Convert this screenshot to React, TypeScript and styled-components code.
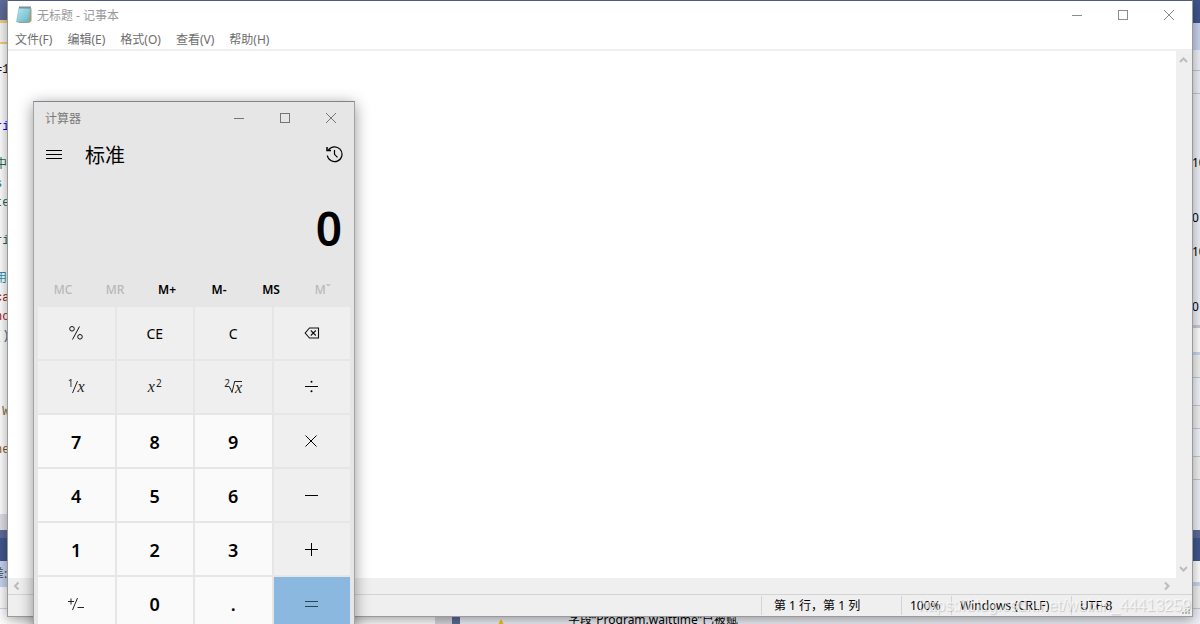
import React from "react";
import styled, { createGlobalStyle, css } from "styled-components";

const ui = `"Noto Sans", "Noto Sans CJK SC", sans-serif`;

const GlobalStyle = createGlobalStyle`
  *, *::before, *::after { box-sizing: border-box; }
  html, body { margin: 0; height: 100%; overflow: hidden; }
  body { font-family: ${ui}; font-size: 12px; color: #000; }
  button { border: 0; padding: 0; margin: 0; background: none; font: inherit; color: inherit; }
  svg { display: block; }
`;

const Desktop = styled.main`
  position: relative;
  height: 100vh;
  overflow: hidden;
  background: #f0f1f8;
`;

/* ---------- IDE behind the windows ---------- */

const Ide = styled.div`
  display: flex;
  height: 100%;
`;

const EditorPane = styled.section`
  display: flex;
  flex-direction: column;
  flex: 0 0 452px;
  background: #fff;
`;

const PaneGap = styled.div`
  flex: 0 0 8px;
  background: #5d6b99;
`;

const SidePane = styled.section`
  display: flex;
  flex-direction: column;
  flex: 1;
  min-width: 0;
`;

const Band = styled.div<{ $h: number; $c: string; $line?: string }>`
  flex: 0 0 ${(p) => p.$h}px;
  background: ${(p) => p.$c};
  border-bottom: ${(p) => (p.$line ? `1px solid ${p.$line}` : "0")};
`;

const CaptionBand = styled(Band)`
  line-height: 26px;
  text-indent: -8px;
  color: #444;
  overflow: hidden;
`;

const Code = styled.div`
  flex: 0 0 470px;
  display: flex;
  flex-direction: column;
  padding-top: 17px;
  margin-left: -5px;
  font: 12px/19px "Liberation Mono", "Noto Sans CJK SC", monospace;
`;

const CodeLine = styled.div<{ $c?: string }>`
  height: 19px;
  color: ${(p) => p.$c ?? "#111"};
  white-space: pre;
`;

const EditorFoot = styled.div`
  flex: 1;
  display: flex;
  justify-content: flex-end;
`;

const ScrollCorner = styled.div`
  width: 17px;
  background: #d9d9de;
`;

const Values = styled.div`
  flex: 0 0 231px;
  min-height: 0;
  display: flex;
  flex-direction: column;
  align-items: flex-end;
  padding-top: 60px;
  font: 12px/18px "Noto Sans", sans-serif;
`;

const Value = styled.div<{ $wide?: boolean }>`
  flex: none;
  height: 18px;
  width: 8px;
  margin-bottom: ${(p) => (p.$wide ? 37 : 16)}px;
`;

const ErrorRow = styled.div`
  flex: 1;
  min-height: 0;
  display: flex;
  align-items: flex-start;
  padding: 2px 0 0 36px;
  gap: 60px;
  line-height: 18px;
  white-space: nowrap;
`;

/* ---------- shared window parts ---------- */

const TitleBar = styled.header<{ $h: number }>`
  display: flex;
  align-items: center;
  flex: 0 0 ${(p) => p.$h}px;
`;

const CaptionButton = styled.button`
  width: 46px;
  height: 100%;
  display: grid;
  place-items: center;
`;

/* ---------- Notepad ---------- */

const NotepadWindow = styled.section`
  position: absolute;
  inset: 0 7px 7px;
  display: flex;
  flex-direction: column;
  background: #fff;
  border: 1px solid #9a9a9a;
  border-top-color: #4f5a80;
  box-shadow: 0 3px 12px rgba(0, 0, 0, 0.38);
`;

const NotepadTitle = styled.h1`
  flex: 1;
  margin: 0;
  padding-left: 5px;
  font-size: 12px;
  font-weight: 400;
  color: #999;
`;

const MenuBar = styled.nav`
  display: flex;
  flex: 0 0 22px;
  gap: 15px;
  padding: 2px 7px 0;
  border-bottom: 2px solid #efefef;
  color: #6d6d6d;
`;

const MenuItem = styled.button`
  line-height: 18px;
  white-space: nowrap;
`;

const EditArea = styled.div`
  flex: 1;
  min-height: 0;
  display: grid;
  grid-template-columns: 1fr 16px;
  grid-template-rows: 1fr 16px;
  background: #efefef;
`;

const Paper = styled.textarea`
  border: 0;
  outline: 0;
  padding: 4px;
  resize: none;
  background: #fff;
  font: 14px/18px ${ui};
`;

const ScrollTrack = styled.div<{ $vertical?: boolean }>`
  display: flex;
  flex-direction: ${(p) => (p.$vertical ? "column" : "row")};
  align-items: center;
  justify-content: space-between;
  padding: ${(p) => (p.$vertical ? "4px 1px 4px 0" : "0 5px 1px 4px")};
`;

const ScrollButton = styled.button`
  width: 9px;
  height: 10px;
  display: grid;
  place-items: center;
`;

const StatusBar = styled.footer`
  display: flex;
  flex: 0 0 22px;
  justify-content: flex-end;
  border-top: 1px solid #d4d4d4;
  background: #efefef;
`;

const StatusCell = styled.div<{ $w: number; $pad: number }>`
  width: ${(p) => p.$w}px;
  margin-top: 1px;
  height: 19px;
  padding-left: ${(p) => p.$pad}px;
  border-left: 1px solid #d4d4d4;
  line-height: 20px;
  white-space: nowrap;
`;

const Grip = styled.div`
  position: absolute;
  right: 1px;
  bottom: 1px;
`;

const Watermark = styled.div`
  position: absolute;
  right: 9px;
  bottom: 8px;
  font: 16px/20px "Liberation Sans", Arial, sans-serif;
  color: rgba(255, 255, 255, 0.65);
  text-shadow: 1px 1px 1px rgba(0, 0, 0, 0.16);
  white-space: nowrap;
`;

/* ---------- Calculator ---------- */

const CalcWindow = styled.section`
  position: absolute;
  top: 101px;
  left: 33px;
  width: 322px;
  display: flex;
  flex-direction: column;
  background: #e6e6e6;
  border: 1px solid #a0a3a5;
  border-top-color: #7d868c;
  box-shadow: 0 3px 14px rgba(0, 0, 0, 0.42);
`;

const CalcTitle = styled.h2`
  flex: 1;
  margin: 0;
  padding-left: 11px;
  font-size: 12px;
  font-weight: 400;
  color: #7a7a7a;
`;

const ModeBar = styled.div`
  display: flex;
  align-items: center;
  height: 40px;
`;

const ModeButton = styled.button`
  width: 40px;
  height: 40px;
  display: grid;
  place-items: center;
`;

const ModeName = styled.h3`
  flex: 1;
  margin: 0;
  padding: 3px 0 0 11px;
  font-size: 20px;
  line-height: 37px;
  font-weight: 400;
`;

const Display = styled.output`
  display: block;
  height: 99px;
  padding: 10px 12px 0 0;
  text-align: right;
  font-size: 46px;
  line-height: 88px;
  font-weight: 600;
`;

const MemoryRow = styled.div`
  display: grid;
  grid-template-columns: repeat(6, 1fr);
  height: 34px;
  padding: 0 5px 2px 3px;
`;

const MemoryButton = styled.button`
  font-size: 12px;
  font-weight: 600;
  &:disabled {
    color: #b8b8b8;
    font-weight: 500;
  }
`;

const Keys = styled.div`
  display: grid;
  grid-template-columns: repeat(4, 1fr);
  grid-auto-rows: 52px;
  gap: 2px;
  padding: 0 4px 4px;
`;

type Kind = "digit" | "op" | "equals";

const Key = styled.button<{ $kind: Kind }>`
  display: grid;
  place-items: center;
  background: #efefef;
  font-size: 14px;
  ${(p) =>
    p.$kind === "digit" &&
    css`
      background: #fafafa;
      padding-top: 2px;
      font-size: 18px;
      font-weight: 600;
    `}
  ${(p) =>
    p.$kind === "equals" &&
    css`
      background: #8ab8df;
      padding-top: 2px;
    `}
`;

/* ---------- drawings ---------- */

const Stroke = ({ w, h, d, c = "#000", sw = 1, crisp }: { w: number; h: number; d: string; c?: string; sw?: number; crisp?: boolean }) => (
  <svg width={w} height={h} viewBox={`0 0 ${w} ${h}`} fill="none" stroke={c} strokeWidth={sw} shapeRendering={crisp ? "crispEdges" : "auto"} aria-hidden="true">
    <path d={d} />
  </svg>
);

const WindowButtons = ({ color }: { color: string }) => (
  <>
    <CaptionButton aria-label="最小化"><Stroke w={10} h={10} d="M0 5.5H10" c={color} crisp /></CaptionButton>
    <CaptionButton aria-label="最大化"><Stroke w={10} h={10} d="M.5 .5H9.5V9.5H.5Z" c={color} crisp /></CaptionButton>
    <CaptionButton aria-label="关闭"><Stroke w={10} h={10} d="M0 0L10 10M10 0L0 10" c={color} /></CaptionButton>
  </>
);

const arrows = {
  up: "M1 7L4.5 3.5L8 7",
  down: "M1 3L4.5 6.5L8 3",
  left: "M6.5 1.5L3 5L6.5 8.5",
  right: "M3 1.5L6.5 5L3 8.5",
};
const Arrow = ({ to }: { to: keyof typeof arrows }) => (
  <ScrollButton aria-label={to}><Stroke w={9} h={10} d={arrows[to]} c="#bcbcbc" sw={2} /></ScrollButton>
);

const NotepadIcon = () => (
  <svg width="16" height="18" viewBox="0 0 16 18" aria-hidden="true">
    <defs>
      <linearGradient id="page" x1="0" y1="0" x2="1" y2="1">
        <stop offset="0" stopColor="#c6edf3" />
        <stop offset="1" stopColor="#58aec2" />
      </linearGradient>
    </defs>
    <path d="M4 2.5H15.5V15L13 17H2.5Z" fill="#a99a7c" />
    <path d="M3 1.5H14.5L12.5 16H.5Z" fill="url(#page)" stroke="#7fb6c2" strokeWidth=".6" />
    <path d="M3.5 5H13M3.2 7.5H12.6M2.8 10H12.2M2.4 12.5H11.8" stroke="#8fd0dc" strokeWidth=".7" />
    <path d="M4 .3V2.6M6 .3V2.6M8 .3V2.6M10 .3V2.6M12 .3V2.6M14 .3V2.6" stroke="#4b5a60" strokeWidth="1" />
  </svg>
);

const HistoryIcon = () => (
  <svg width="18" height="18" viewBox="-1 0 18 18" fill="none" stroke="#000" strokeWidth="1.2" aria-hidden="true">
    <path d="M2.2 5.5A7.4 7.4 0 1 1 1.3 10.5" />
    <path d="M1 2V5.6H5" strokeWidth="1.5" />
    <path d="M8.5 5V9.3L11.5 12.3" />
  </svg>
);

const PercentIcon = () => (
  <svg width="16" height="16" viewBox="0 0 16 16" fill="none" stroke="#111" aria-hidden="true">
    <circle cx="4" cy="3.8" r="2.3" />
    <circle cx="12" cy="11.8" r="2.3" />
    <path d="M11.5 1.5L4.5 14.5" />
  </svg>
);

const BackspaceIcon = () => (
  <svg width="16" height="12" viewBox="0 0 16 12" fill="none" stroke="#111" strokeWidth="1.1" aria-hidden="true">
    <path d="M5.5 1H14.5V11H5.5L1.2 6Z" />
    <path d="M6.8 3.5L11.8 8.5M11.8 3.5L6.8 8.5" />
  </svg>
);

const NegateIcon = () => (
  <Stroke w={18} h={16} d="M1 5.5H7M4 2.5V8.5M10.5 2L5.5 14M10.5 11.5H17" c="#222" />
);

const DivideIcon = () => (
  <svg width="14" height="14" viewBox="0 0 14 14" aria-hidden="true">
    <path d="M0 6H13V7H0Z" fill="#000" />
    <circle cx="6.5" cy="1.8" r="1" />
    <circle cx="6.5" cy="11.2" r="1" />
  </svg>
);

const EqualsIcon = () => <Stroke w={14} h={8} d="M0 1.5H13M0 6.5H13" c="#2c4356" />;

const Formula = styled.span`
  display: flex;
  align-items: center;
  height: 18px;
  font-family: "Liberation Serif", serif;
  color: #222;
`;

const Variable = styled.i<{ $barred?: boolean }>`
  font-size: 16px;
  line-height: ${(p) => (p.$barred ? 12 : 18)}px;
  border-top: ${(p) => (p.$barred ? "1px solid #222" : "0")};
`;

const Small = styled.sup<{ $tuck?: boolean }>`
  align-self: flex-start;
  margin: ${(p) => (p.$tuck ? "0 -2px 0 0" : "0 0 0 1px")};
  font: 10px/10px "Noto Sans", sans-serif;
`;

const Reciprocal = () => (
  <Formula><Small $tuck>1</Small><Stroke w={6} h={14} d="M5.5 1L.5 13" c="#222" /><Variable>x</Variable></Formula>
);
const Square = () => (
  <Formula><Variable>x</Variable><Small>2</Small></Formula>
);
const Root = () => (
  <Formula><Small $tuck>2</Small><Stroke w={7} h={14} d="M1 8L2 7.5L4 12.5L6.8 1" c="#222" /><Variable $barred>x</Variable></Formula>
);

const keys: { label: string; kind: Kind; face?: React.ReactNode }[] = [
  { label: "百分比", kind: "op", face: <PercentIcon /> },
  { label: "CE", kind: "op" },
  { label: "C", kind: "op" },
  { label: "退格", kind: "op", face: <BackspaceIcon /> },
  { label: "倒数", kind: "op", face: <Reciprocal /> },
  { label: "平方", kind: "op", face: <Square /> },
  { label: "平方根", kind: "op", face: <Root /> },
  { label: "除以", kind: "op", face: <DivideIcon /> },
  { label: "7", kind: "digit" },
  { label: "8", kind: "digit" },
  { label: "9", kind: "digit" },
  { label: "乘以", kind: "op", face: <Stroke w={13} h={12} d="M.5 .5L11.5 11.5M11.5 .5L.5 11.5" /> },
  { label: "4", kind: "digit" },
  { label: "5", kind: "digit" },
  { label: "6", kind: "digit" },
  { label: "减", kind: "op", face: <Stroke w={14} h={2} d="M0 1.5H13" /> },
  { label: "1", kind: "digit" },
  { label: "2", kind: "digit" },
  { label: "3", kind: "digit" },
  { label: "加", kind: "op", face: <Stroke w={14} h={14} d="M0 7.5H13M6.5 1V14" /> },
  { label: "正负", kind: "digit", face: <NegateIcon /> },
  { label: "0", kind: "digit" },
  { label: ".", kind: "digit" },
  { label: "等于", kind: "equals", face: <EqualsIcon /> },
];

const memory = [
  { label: "MC", off: true },
  { label: "MR", off: true },
  { label: "M+" },
  { label: "M-" },
  { label: "MS" },
  { label: "Mˇ", off: true },
];

const code: [string, string?][] = [
  ["=1"], [""], [""], ["ri", "#0000ff"], [""], ["中", "#1a6b50"], ["s", "#1a6b50"], ["te", "#1a6b50"], [""],
  ["ri", "#1a6b50"], [""], ["用", "#2b91af"], ["ca", "#a31515"], ["no", "#a31515"], ["()", "#2b6cb0"], [""], [""], [""],
  [" W", "#8a6d3b"], [""], ["ne", "#8a5a20"],
];

const menus = ["文件(F)", "编辑(E)", "格式(O)", "查看(V)", "帮助(H)"];

const Backdrop = () => (
  <Ide>
    <EditorPane>
      <Band $h={20} $c="#5d6b99" />
      <Band $h={3} $c="#f5cc84" />
      <Band $h={19} $c="#f7f7f7" />
      <Band $h={2} $c="#f0cf7c" />
      <Code>
        {code.map(([text, color], i) => <CodeLine key={i} $c={color}>{text}</CodeLine>)}
      </Code>
      <Band $h={16} $c="#e0e1e8" />
      <Band $h={8} $c="#5d6b99" />
      <Band $h={23} $c="#40568d" />
      <CaptionBand $h={26} $c="#c9d4f0">差:</CaptionBand>
      <Band $h={22} $c="#fdfdfd" $line="#ccd5f0" />
      <EditorFoot><ScrollCorner /></EditorFoot>
    </EditorPane>
    <PaneGap />
    <SidePane>
      <Band $h={23} $c="#40568d" />
      <Band $h={27} $c="#c9d4f0" />
      <Band $h={21} $c="#f0f1f8" $line="#c4c6d2" />
      <Band $h={23} $c="#f0f1f8" $line="#c4c6d2" />
      <Values>
        <Value $wide>10</Value>
        <Value>0</Value>
        <Value $wide>10</Value>
        <Value>0</Value>
      </Values>
      <Band $h={3} $c="#ccccd0" />
      <Band $h={24} $c="#fff" />
      <Band $h={3} $c="#cdd6ee" />
      <Band $h={23} $c="#f2f2f2" $line="#c4c6d8" />
      <Band $h={28} $c="#f3f5fd" $line="#c4c6d8" />
      <Band $h={23} $c="#f2f2f2" $line="#c4c6d8" />
      <Band $h={28} $c="#f3f5fd" $line="#c4c6d8" />
      <Band $h={23} $c="#f2f2f2" $line="#c4c6d8" />
      <Band $h={50} $c="#f0f1f8" />
      <Band $h={8} $c="#5d6b99" />
      <Band $h={23} $c="#40568d" />
      <Band $h={21} $c="#fff" />
      <Band $h={4} $c="#cdd6ee" />
      <Band $h={23} $c="#f2f2f2" $line="#c4c6d8" />
      <ErrorRow>
        <svg width="12" height="14" viewBox="0 0 12 14" aria-hidden="true"><path d="M5 8L0 18H10Z" fill="#f0c419" /></svg>
        <span>字段“Program.waittime”已被赋</span>
      </ErrorRow>
    </SidePane>
  </Ide>
);

const TitleIcon = styled.span`
  padding-left: 8px;
`;

const Notepad = () => (
  <NotepadWindow>
    <TitleBar $h={28}>
      <TitleIcon><NotepadIcon /></TitleIcon>
      <NotepadTitle>无标题 - 记事本</NotepadTitle>
      <WindowButtons color="#8c8c8c" />
    </TitleBar>
    <MenuBar>{menus.map((m) => <MenuItem key={m}>{m}</MenuItem>)}</MenuBar>
    <EditArea>
      <Paper aria-label="文本编辑器" spellCheck={false} />
      <ScrollTrack $vertical><Arrow to="up" /><Arrow to="down" /></ScrollTrack>
      <ScrollTrack><Arrow to="left" /><Arrow to="right" /></ScrollTrack>
    </EditArea>
    <StatusBar>
      <StatusCell $w={140} $pad={12}>第 1 行，第 1 列</StatusCell>
      <StatusCell $w={50} $pad={8}>100%</StatusCell>
      <StatusCell $w={120} $pad={8}>Windows (CRLF)</StatusCell>
      <StatusCell $w={121} $pad={8}>UTF-8</StatusCell>
    </StatusBar>
    <Grip>
      <svg width="9" height="9" viewBox="0 0 9 9" fill="#b4b4b4" aria-hidden="true">
        <path d="M6 0h2v2h-2zM3 3h2v2h-2zM6 3h2v2h-2zM0 6h2v2h-2zM3 6h2v2h-2zM6 6h2v2h-2z" />
      </svg>
    </Grip>
  </NotepadWindow>
);

const Calculator = () => (
  <CalcWindow>
    <TitleBar $h={32}>
      <CalcTitle>计算器</CalcTitle>
      <WindowButtons color="#757575" />
    </TitleBar>
    <ModeBar>
      <ModeButton aria-label="打开导航"><Stroke w={16} h={10} d="M0 1.5H16M0 5.5H16M0 9.5H16" crisp /></ModeButton>
      <ModeName>标准</ModeName>
      <ModeButton aria-label="历史记录"><HistoryIcon /></ModeButton>
    </ModeBar>
    <Display>0</Display>
    <MemoryRow>
      {memory.map((m) => <MemoryButton key={m.label} disabled={m.off}>{m.label}</MemoryButton>)}
    </MemoryRow>
    <Keys>
      {keys.map((k) => <Key key={k.label} $kind={k.kind} aria-label={k.label}>{k.face ?? k.label}</Key>)}
    </Keys>
  </CalcWindow>
);

export default function App() {
  return (
    <Desktop>
      <GlobalStyle />
      <Backdrop />
      <Notepad />
      <Calculator />
      <Watermark>https://blog.csdn.net/weixin_44413259</Watermark>
    </Desktop>
  );
}
